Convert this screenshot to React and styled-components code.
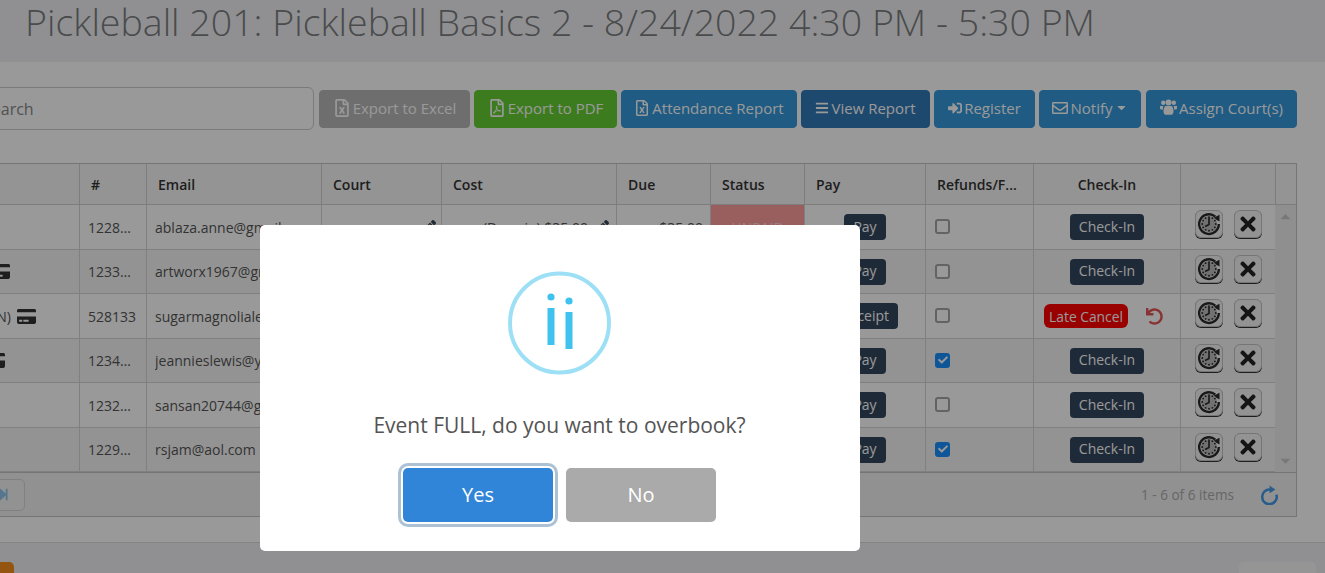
import React from "react";
import styled, { createGlobalStyle } from "styled-components";
import {
  FaRegFileExcel,
  FaRegFilePdf,
  FaBars,
  FaSignInAlt,
  FaRegEnvelope,
  FaCaretDown,
  FaPencilAlt,
  FaCreditCard,
  FaTimes,
  FaUndo,
  FaStepForward,
  FaCaretUp,
  FaCheck,
} from "react-icons/fa";

const GlobalStyle = createGlobalStyle`
  html, body {
    margin: 0;
    width: 1325px;
    height: 573px;
    overflow: hidden;
    background: #fff;
    font-family: "Open Sans", "Liberation Sans", sans-serif;
  }
`;

const Viewport = styled.div`
  position: relative;
  width: 1325px;
  height: 573px;
  overflow: hidden;
`;

const Page = styled.div`
  width: 1445px;
  margin-left: -120px;
`;

const TitleBar = styled.header`
  height: 62px;
  box-sizing: border-box;
  padding-left: 145px;
  background: #f0f1f3;
`;

const Title = styled.h1`
  margin: 0;
  font-size: 37.5px;
  line-height: 43px;
  font-weight: 300;
  color: #7b7d80;
  white-space: nowrap;
`;

const Toolbar = styled.div`
  display: flex;
  align-items: center;
  height: 43px;
  margin: 25px 28px 0 88px;
`;

const Search = styled.input`
  width: 346px;
  height: 43px;
  box-sizing: border-box;
  padding: 0 14px;
  margin-right: 5px;
  border: 1px solid #ccc;
  border-radius: 6px;
  background: #fff;
  font: 16px "Open Sans", sans-serif;
  &::placeholder {
    color: #888;
    opacity: 1;
  }
`;

const ToolButton = styled.button`
  display: flex;
  align-items: center;
  justify-content: center;
  gap: 2px;
  width: ${(p) => p.$w}px;
  height: 38px;
  margin-right: ${(p) => p.$gap ?? 4}px;
  padding: 0 0 2px;
  border: 1px solid ${(p) => p.$bg};
  border-radius: 4px;
  background: ${(p) => p.$bg};
  color: #fff;
  font: 15px "Open Sans", sans-serif;
  white-space: nowrap;
  svg {
    font-size: ${(p) => p.$icon ?? 14}px;
  }
`;

const GridBox = styled.section`
  margin: 33px 28px 0 0;
  border: solid #c4c4c4;
  border-width: 1px 1px 1px 0;
`;

const cols = "200px 67px 175px 120px 175px 94px 94px 121px 108px 147px 95px";

const HeadRow = styled.div`
  display: grid;
  grid-template-columns: ${cols} 1fr;
  height: 40px;
  background: #f7f7f7;
  border-bottom: 1px solid #d0d0d0;
`;

const HeadCell = styled.div`
  display: flex;
  align-items: center;
  justify-content: ${(p) => (p.$center ? "center" : "flex-start")};
  padding: 0 11px;
  min-width: 0;
  border-right: 1px solid #d0d0d0;
  font-size: 14px;
  font-weight: 600;
  color: #333;
  &:last-child {
    border-right: 0;
  }
`;

const BodyWrap = styled.div`
  display: flex;
`;

const Rows = styled.div`
  width: 1395px;
`;

const Row = styled.div`
  display: grid;
  grid-template-columns: ${cols};
  height: ${(p) => p.$h}px;
  box-sizing: border-box;
  background: ${(p) => (p.$alt ? "#f6f6f6" : "#fff")};
  border-bottom: 1px solid #d5d5d5;
`;

const Cell = styled.div`
  display: flex;
  align-items: center;
  justify-content: ${(p) => p.$justify || "flex-start"};
  min-width: 0;
  padding: 0 ${(p) => p.$pad ?? 8}px;
  border-right: 1px solid #d5d5d5;
  background: ${(p) => p.$bg || "transparent"};
  font-size: 14px;
  color: ${(p) => p.$color || "#555"};
`;

const ActionsCell = styled(Cell)`
  padding: 0 0 0 14px;
  border-right: 0;
`;

const Clip = styled.span`
  overflow: hidden;
  white-space: nowrap;
  text-overflow: ellipsis;
`;

const NameFill = styled.span`
  width: ${(p) => p.$w}px;
  flex: none;
  text-align: right;
  white-space: nowrap;
`;

const CardIcon = styled(FaCreditCard)`
  flex: none;
  margin-left: 6px;
  font-size: 19px;
  color: #333;
`;

const Pencil = styled(FaPencilAlt)`
  flex: none;
  margin-left: 7px;
  font-size: 14px;
  color: #3a4a5a;
`;

const DarkButton = styled.button`
  display: flex;
  align-items: center;
  height: 26px;
  padding: 0 ${(p) => p.$pad ?? 9}px 2px;
  border: 0;
  border-radius: 4px;
  background: #32465d;
  color: #fff;
  font: 14px "Open Sans", sans-serif;
`;

const LateCancel = styled.span`
  display: flex;
  align-items: center;
  justify-content: center;
  flex: none;
  width: 84px;
  height: 24px;
  border-radius: 6px;
  background: #ff0000;
  color: #fff;
  font-size: 13.8px;
  white-space: nowrap;
`;

const UndoIcon = styled(FaUndo)`
  flex: none;
  margin-left: 18px;
  font-size: 17px;
  color: #e25555;
`;

const Box = styled.span`
  display: flex;
  align-items: center;
  justify-content: center;
  width: 15px;
  height: 15px;
  margin-bottom: 1px;
  box-sizing: border-box;
  border: ${(p) => (p.$on ? "0" : "2px solid #a5a5a5")};
  border-radius: 3px;
  background: ${(p) => (p.$on ? "#1a90ff" : "#fff")};
  color: #fff;
  font-size: 10px;
`;

const ActionButton = styled.button`
  display: flex;
  align-items: center;
  justify-content: center;
  flex: none;
  width: 28px;
  height: 28px;
  margin: 0 11px 6px 0;
  padding: 0;
  border: 1px solid #c4c4c4;
  border-radius: 6px;
  background: #f6f6f6;
  box-shadow: 0 1px 0 #333;
  color: #222;
  font-size: 22px;
`;

const Scroller = styled.div`
  display: flex;
  flex-direction: column;
  justify-content: space-between;
  align-items: center;
  width: 21px;
  padding: 4px 0;
  box-sizing: border-box;
  background: #efefef;
  color: #c8c8c8;
  font-size: 15px;
`;

const Pager = styled.div`
  display: flex;
  align-items: center;
  height: 44px;
  box-sizing: border-box;
  padding: 0 17px 0 101px;
  border-top: 1px solid #c4c4c4;
  background: #f2f2f2;
`;

const PageButton = styled.button`
  display: flex;
  align-items: center;
  justify-content: center;
  width: 44px;
  height: 32px;
  padding: 0;
  border: 1px solid #d5d5d5;
  border-radius: 5px;
  background: #f4f4f4;
  color: #8fc4ee;
  font-size: 13px;
`;

const PageInfo = styled.span`
  margin-left: auto;
  margin-right: 26px;
  font-size: 13.6px;
  color: #aaa;
`;

const Gap = styled.div`
  height: 25px;
  border-bottom: 1px solid #ddd;
`;

const BottomBar = styled.footer`
  display: flex;
  justify-content: space-between;
  height: 60px;
  box-sizing: border-box;
  padding: 19px 9px 0 74px;
  background: #f0f1f3;
`;

const BottomButton = styled.div`
  width: ${(p) => p.$w}px;
  height: 36px;
  border-radius: 5px;
  background: ${(p) => p.$bg};
`;

const Overlay = styled.div`
  position: absolute;
  inset: 0;
  padding: 225px 0 0 260px;
  background: rgba(0, 0, 0, 0.4);
`;

const Modal = styled.div`
  display: flex;
  flex-direction: column;
  align-items: center;
  width: 600px;
  height: 326px;
  box-sizing: border-box;
  padding-top: 46px;
  border-radius: 5px;
  background: #fff;
`;

const Message = styled.p`
  margin: 36px 1px 0 0;
  font-size: 21px;
  line-height: 28px;
  color: #545454;
`;

const ModalActions = styled.div`
  display: flex;
  gap: 13px;
  margin: 29px 1px 0 0;
`;

const ModalButton = styled.button`
  width: 150px;
  height: 54px;
  padding: 0 0 2px;
  border: 0;
  border-radius: 5px;
  background: ${(p) => p.$bg};
  box-shadow: ${(p) =>
    p.$focus ? "0 0 0 2px #fff, 0 0 0 5px rgba(50, 100, 150, 0.4)" : "none"};
  color: #fff;
  font: 20px "Open Sans", sans-serif;
`;

function InfoIcon() {
  return (
    <svg width="104" height="104" viewBox="0 0 104 104">
      <circle cx="51.5" cy="52" r="49.5" fill="none" stroke="#9de0f6" strokeWidth="4" />
      <circle cx="43" cy="26" r="3.6" fill="#3fc3ee" />
      <rect x="39.5" y="37" width="7" height="37" fill="#3fc3ee" />
      <circle cx="61" cy="30" r="3.6" fill="#3fc3ee" />
      <rect x="57.5" y="41" width="7" height="37" fill="#3fc3ee" />
    </svg>
  );
}

function ClockIcon() {
  const ticks = [0, 30, 60, 90, 120, 150, 180, 210, 240, 270, 300, 330];
  return (
    <svg width="24" height="24" viewBox="0 0 22 22">
      <path d="M16.8 4.2A9 9 0 1 0 20 11" fill="none" stroke="#2b2b2b" strokeWidth="2.2" />
      <path d="M14.8 5.6L20.6 2.6V8.6Z" fill="#2b2b2b" />
      <circle cx="11" cy="11" r="7.4" fill="#bdbdbd" />
      {ticks.map((a) => (
        <circle
          key={a}
          cx={11 + 6.2 * Math.cos((a * Math.PI) / 180)}
          cy={11 + 6.2 * Math.sin((a * Math.PI) / 180)}
          r="0.85"
          fill="#2b2b2b"
        />
      ))}
      <path d="M11 5.4V11.4L7.4 13.2" fill="none" stroke="#2b2b2b" strokeWidth="1.5" />
    </svg>
  );
}

function UsersIcon() {
  return (
    <svg width="17" height="17" viewBox="0 0 17 17" fill="currentColor">
      <circle cx="3.2" cy="3.8" r="2.2" />
      <circle cx="13.8" cy="3.8" r="2.2" />
      <circle cx="8.5" cy="3.6" r="3" />
      <path d="M0 7h3.4c-.5 1-.6 2.2-.2 3.6H1.6C.6 10.6 0 10 0 9Z" />
      <path d="M17 7h-3.4c.5 1 .6 2.2.2 3.6h1.6c1 0 1.6-.6 1.6-1.6Z" />
      <path d="M5.2 7h6.6c1 1 1.7 3 1.7 5.4 0 2-1 3.4-2.8 3.4H6.3c-1.8 0-2.8-1.4-2.8-3.4C3.5 10 4.2 8 5.2 7Z" />
    </svg>
  );
}

function RefreshIcon() {
  return (
    <svg width="19" height="20" viewBox="0 0 19 20" style={{ display: "block" }}>
      <path d="M10.4 4.6A7.3 7.3 0 1 0 16.4 9.6" fill="none" stroke="#4699e8" strokeWidth="2.6" />
      <path d="M9.6 0.6L15.4 4.6L9.6 8.2Z" fill="#4699e8" />
    </svg>
  );
}

const members = [
  { id: "1228451", email: "ablaza.anne@gmail.com", h: 45, name: 120, action: "Pay", checked: false },
  { id: "1233072", email: "artworx1967@gmail.com", h: 44, name: 105, card: true, action: "Pay", checked: false, alt: true },
  { id: "528133", email: "sugarmagnolialee@gmail.com", h: 45, name: 131, suffix: "N)", card: true, action: "Receipt", checked: false, late: true },
  { id: "1234106", email: "jeannieslewis@yahoo.com", h: 44, name: 100, card: true, action: "Pay", checked: true, alt: true },
  { id: "1232580", email: "sansan20744@gmail.com", h: 45, name: 120, action: "Pay", checked: false },
  { id: "1229317", email: "rsjam@aol.com", h: 44, name: 120, action: "Pay", checked: true, alt: true },
];

const heads = ["", "#", "Email", "Court", "Cost", "Due", "Status", "Pay", "Refunds/F...", "Check-In", "", ""];

export default function App() {
  return (
    <Viewport>
      <GlobalStyle />
      <Page>
        <TitleBar>
          <Title>Pickleball 201: Pickleball Basics 2 - 8/24/2022 4:30 PM - 5:30 PM</Title>
        </TitleBar>
        <Toolbar>
          <Search placeholder="Search" readOnly />
          <ToolButton $w={151} $bg="#b8b8b8" $icon={18}><FaRegFileExcel />Export to Excel</ToolButton>
          <ToolButton $w={143} $bg="#66cf33" $icon={18}><FaRegFilePdf />Export to PDF</ToolButton>
          <ToolButton $w={176} $bg="#3498db" $icon={16}><FaRegFileExcel />Attendance Report</ToolButton>
          <ToolButton $w={129} $bg="#337ab7"><FaBars />View Report</ToolButton>
          <ToolButton $w={101} $bg="#3498db"><FaSignInAlt />Register</ToolButton>
          <ToolButton $w={102} $bg="#3498db" $gap={5} $icon={16}><FaRegEnvelope />Notify<FaCaretDown style={{ fontSize: 13 }} /></ToolButton>
          <ToolButton $w={151} $bg="#3498db" $gap={0}><UsersIcon />Assign Court(s)</ToolButton>
        </Toolbar>
        <GridBox>
          <HeadRow>
            {heads.map((h, i) => (
              <HeadCell key={i} $center={h === "Check-In"}>{h}</HeadCell>
            ))}
          </HeadRow>
          <BodyWrap>
            <Rows>
              {members.map((m) => (
                <Row key={m.id} $h={m.h} $alt={m.alt}>
                  <Cell $pad={0}>
                    <NameFill $w={m.name}>{m.suffix}</NameFill>
                    {m.card && <CardIcon />}
                  </Cell>
                  <Cell><Clip>{m.id}</Clip></Cell>
                  <Cell><Clip>{m.email}</Clip></Cell>
                  <Cell $justify="flex-end" $pad={5}><Pencil /></Cell>
                  <Cell $justify="flex-end" $pad={7}>(Drop-in) $35.00<Pencil /></Cell>
                  <Cell $justify="flex-end" $pad={7}>$35.00</Cell>
                  <Cell $justify="center" $bg="#ff9f9f" $color="#ffd6d6">UNPAID</Cell>
                  <Cell $justify="center"><DarkButton>{m.action}</DarkButton></Cell>
                  <Cell $pad={9}><Box $on={m.checked}>{m.checked && <FaCheck />}</Box></Cell>
                  {m.late ? (
                    <Cell $pad={10}><LateCancel>Late Cancel</LateCancel><UndoIcon /></Cell>
                  ) : (
                    <Cell $justify="center"><DarkButton>Check-In</DarkButton></Cell>
                  )}
                  <ActionsCell>
                    <ActionButton><ClockIcon /></ActionButton>
                    <ActionButton><FaTimes /></ActionButton>
                  </ActionsCell>
                </Row>
              ))}
            </Rows>
            <Scroller>
              <FaCaretUp />
              <FaCaretDown />
            </Scroller>
          </BodyWrap>
          <Pager>
            <PageButton><FaStepForward /></PageButton>
            <PageInfo>1 - 6 of 6 items</PageInfo>
            <RefreshIcon />
          </Pager>
        </GridBox>
        <Gap />
        <BottomBar>
          <BottomButton $w={60} $bg="#f58e1a" />
          <BottomButton $w={77} $bg="#f9f9f9" />
        </BottomBar>
      </Page>
      <Overlay>
        <Modal>
          <InfoIcon />
          <Message>Event FULL, do you want to overbook?</Message>
          <ModalActions>
            <ModalButton $bg="#3085d8" $focus>Yes</ModalButton>
            <ModalButton $bg="#aaaaaa">No</ModalButton>
          </ModalActions>
        </Modal>
      </Overlay>
    </Viewport>
  );
}
